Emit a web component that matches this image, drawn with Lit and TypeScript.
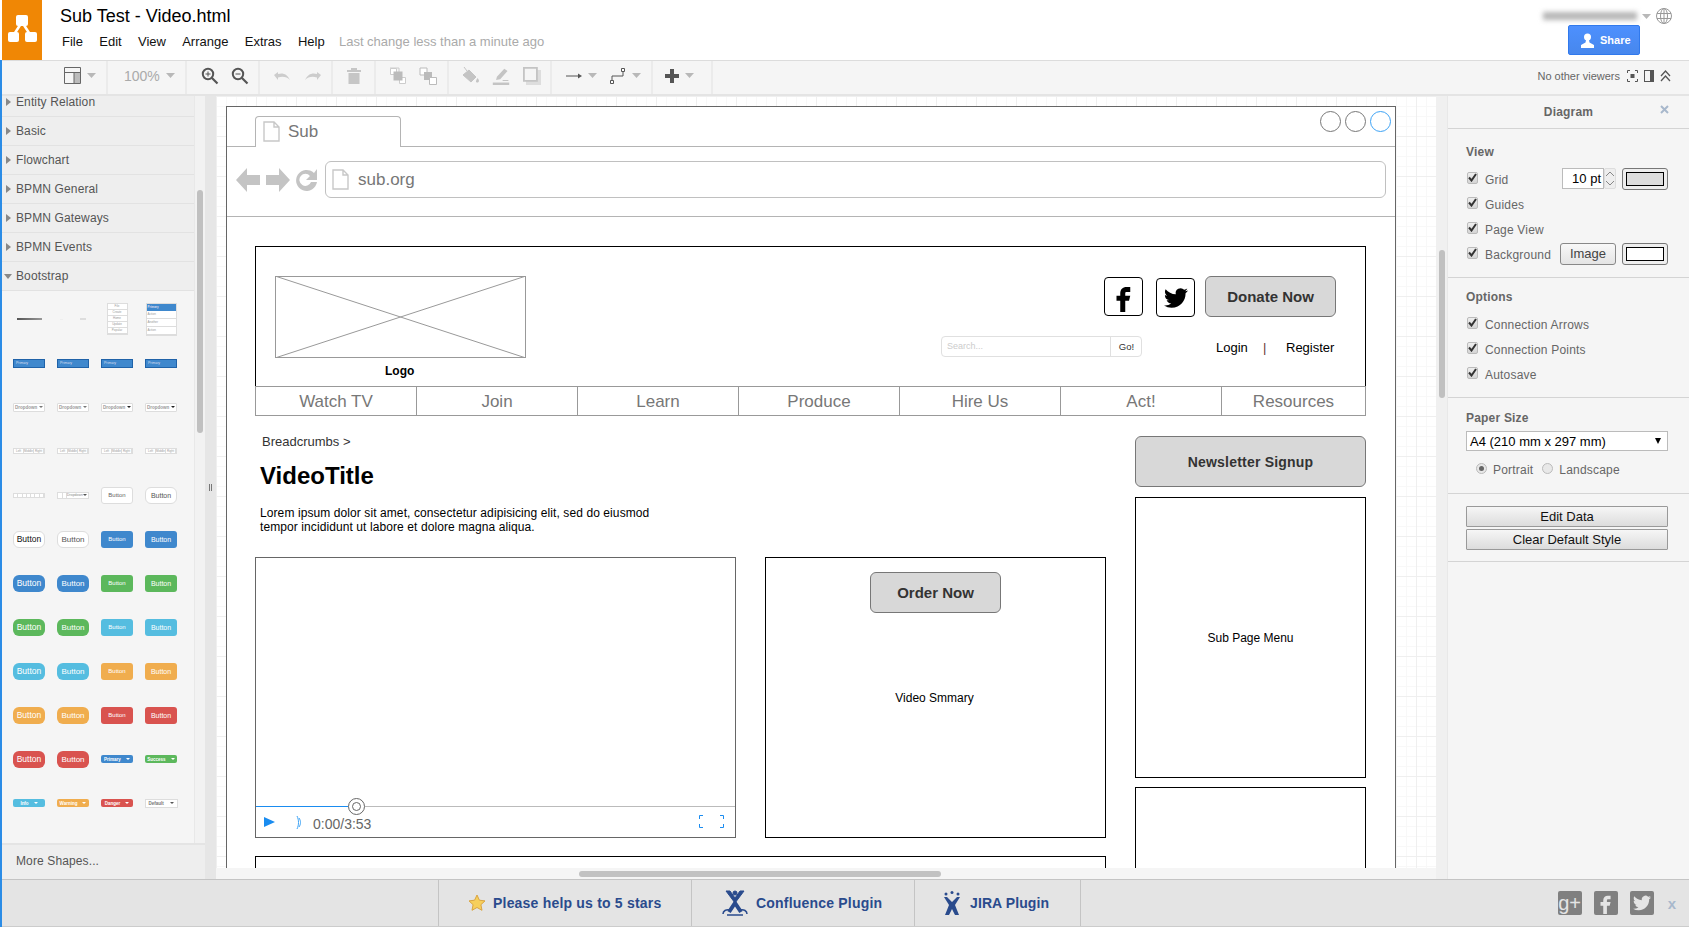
import {LitElement, html, css, svg} from 'lit';
import {customElement} from 'lit/decorators.js';

const caret = html`<svg class="caret" width="9" height="5" viewBox="0 0 9 5"><path d="M0 0h9L4.5 5z" fill="#b8b8b8"/></svg>`;

const docIcon = html`<svg class="doc" width="17" height="21" viewBox="0 0 17 21"><path d="M1 1h10l5 5v14H1z M11 1v5h5" fill="#fff" stroke="#c8c8c8" stroke-width="1.4"/></svg>`;

const fbPath = svg`<path d="M14 8h3V4h-3c-3 0-5 2-5 5v2H6v4h3v9h4v-9h3l1-4h-4V9c0-.6.4-1 1-1z"/>`;
const twPath = svg`<path d="M23.95 4.57a10 10 0 01-2.82.78 4.96 4.96 0 002.16-2.73c-.95.56-2 .96-3.13 1.19a4.92 4.92 0 00-8.38 4.48C7.69 8.1 4.07 6.13 1.64 3.16a4.82 4.82 0 00-.67 2.48c0 1.71.87 3.21 2.19 4.1a4.9 4.9 0 01-2.23-.62v.06a4.92 4.92 0 003.95 4.83 5 5 0 01-2.21.08 4.94 4.94 0 004.6 3.42 9.87 9.87 0 01-6.1 2.1c-.39 0-.78-.02-1.17-.06a14 14 0 007.56 2.21c9.05 0 14-7.5 14-13.99 0-.21 0-.42-.02-.63A9.94 9.94 0 0024 4.59z"/>`;

const toolbarGroups = [
    {w: 106, pl: 62, items: html`
	<svg width="17" height="17" viewBox="0 0 17 17"><path d="M.5.5h16v16H.5z M.5 5.5h16" fill="none" stroke="#666"/><path d="M10 6h6v10h-6z" fill="#bbb"/><path d="M10 5.5v11" stroke="#666"/></svg>
	<span class="gap6"></span>${caret}`},
    {w: 79, pl: 16, items: html`<span class="zoom-val">100%</span><span class="gap11"></span>${caret}`},
    {w: 73, pl: 14, items: html`
	<svg width="18" height="18" viewBox="0 0 18 18"><circle cx="7" cy="7" r="5.2" fill="none" stroke="#555" stroke-width="2"/><path d="M11 11l5.5 5.5" stroke="#555" stroke-width="2.2"/><path d="M4.5 7h5M7 4.5v5" stroke="#555"/></svg>
	<span class="gap12"></span>
	<svg width="18" height="18" viewBox="0 0 18 18"><circle cx="7" cy="7" r="5.2" fill="none" stroke="#555" stroke-width="2"/><path d="M11 11l5.5 5.5" stroke="#555" stroke-width="2.2"/><path d="M4.5 7h5" stroke="#555"/></svg>`},
    {w: 73, pl: 13, items: html`
	<svg width="18" height="18" viewBox="0 0 18 18"><path d="M1 8l4-3v2c5-1.500 9 0 12 6-3-3-7-4-12-2.500V13z" fill="#ccc"/></svg>
	<span class="gap13"></span>
	<svg width="18" height="18" viewBox="0 0 18 18"><path d="M17 8l-4-3v2C8 5.500 4 7 1 13c3-3 7-4 12-2.500V13z" fill="#ccc"/></svg>`},
    {w: 43, pl: 13, items: html`
	<svg width="16" height="18" viewBox="0 0 16 18"><path d="M1 3h14v2H1zM5 1h6v2H5zM2.500 6h11v11h-11z" fill="#c6c6c6"/></svg>`},
    {w: 73, pl: 13, items: html`
	<svg width="18" height="18" viewBox="0 0 18 18"><path d="M1 1h9v9" fill="none" stroke="#ccc"/><path d="M1.500 1.500h6v6h-6zM10.500 10.500h6v6h-6z" fill="#fff" stroke="#ccc"/><path d="M4.500 4.500h9v9h-9z" fill="#bbb"/></svg>
	<span class="gap12"></span>
	<svg width="18" height="18" viewBox="0 0 18 18"><path d="M1 1h7v7H1z" fill="#fff" stroke="#bbb"/><path d="M5 5h8v8H5z" fill="#bbb"/><path d="M10.500 10.500h7v7h-7z" fill="#fff" stroke="#bbb"/></svg>`},
    {w: 103, pl: 13, items: html`
	<svg width="18" height="20" viewBox="0 0 18 20"><path d="M2 1l3 4M1 9l6-5 7 7-5 5z" fill="#c4c4c4" stroke="#c4c4c4"/><path d="M15.500 12c1.500 2 2 3 1 4s-3 .5-2.500-1 1-2 1.500-3z" fill="#c4c4c4"/></svg>
	<span class="gap12"></span>
	<svg width="18" height="20" viewBox="0 0 22 22"><path d="M1 19h20v3H1z" fill="#c4c4c4"/><path d="M5 16l1-4L15 2l4 3-9 10zM13 16h7v1h-7z" fill="#c4c4c4"/></svg>
	<span class="gap13"></span>
	<svg width="18" height="18" viewBox="0 0 18 18"><path d="M3 3h15v15H3z" fill="#ddd"/><path d="M.9.9h13v13H.9z" fill="#f5f5f5" stroke="#c4c4c4" stroke-width="1.800"/></svg>`},
    {w: 101, pl: 14, items: html`
	<svg width="16" height="10" viewBox="0 0 16 10"><path d="M0 5h14" stroke="#555"/><path d="M12 2.500L16 5l-4 2.500z" fill="#555"/></svg>
	<span class="gap6"></span>${caret}<span class="gap13"></span>
	<svg width="16" height="16" viewBox="0 0 16 16"><path d="M2 13V8h11V3" fill="none" stroke="#555"/><path d="M.5 12.500h3v3h-3zM11.500.5h3v3h-3z" fill="#fff" stroke="#555"/></svg>
	<span class="gap6"></span>${caret}`},
    {w: 60, pl: 12, items: html`
	<svg width="14" height="14" viewBox="0 0 14 14"><path d="M5 0h4v5h5v4H9v5H5V9H0V5h5z" fill="#555"/></svg>
	<span class="gap6"></span>${caret}`},
];

const sections = ['Entity Relation', 'Basic', 'Flowchart', 'BPMN General', 'BPMN Gateways', 'BPMN Events'];

const BLUE = '#3f88cd', GREEN = '#5cb85c', CYAN = '#55bde0', ORANGE = '#f0ad4e', RED = '#d9534f';

const btn = (bg: string, fs: number, round = false) =>
    html`<div class="t-btn ${round ? 'round' : ''}" style="background:${bg};font-size:${fs}px">Button</div>`;

const whiteBtn = (fs: number, color: string, round = false) =>
    html`<div class="t-btn white ${round ? 'round' : ''}" style="font-size:${fs}px;color:${color}">Button</div>`;

const split = (bg: string, label: string) =>
    html`<div class="t-split" style="background:${bg}"><span>${label}</span><i></i></div>`;

const bar = html`<div class="t-bar">Primary</div>`;
const drop = (dark = false) => html`<div class="t-drop"><span>Dropdown</span><i class=${dark ? 'dark' : ''}></i></div>`;
const seg = html`<div class="t-seg"><span>Left</span><span>Middle</span><span>Right</span></div>`;

const thumbs = [
    html`<div class="t-line"></div>`,
    html`<div class="t-faint"><i></i><i></i></div>`,
    html`<div class="t-menu">${['File', 'Create', 'Home', 'Update', 'Popular'].map(t => html`<span>${t}</span>`)}</div>`,
    html`<div class="t-list"><b>Primary</b><span>Action</span><span>Another</span><span>Action</span></div>`,
    bar, bar, bar, bar,
    drop(), drop(), drop(true), drop(true),
    seg, seg, seg, seg,
    html`<div class="t-page">${[1, 2, 3, 4, 5, 6, 7].map(() => html`<span></span>`)}</div>`,
    html`<div class="t-combo"><span></span><span></span><em>Dropdown</em><i></i></div>`,
    whiteBtn(6, '#666'), whiteBtn(7, '#555', true),
    whiteBtn(8.5, '#111', true), whiteBtn(8, '#555', true), btn(BLUE, 6), btn(BLUE, 7),
    btn(BLUE, 8.5, true), btn(BLUE, 8, true), btn(GREEN, 6), btn(GREEN, 7),
    btn(GREEN, 8.5, true), btn(GREEN, 8, true), btn(CYAN, 6), btn(CYAN, 7),
    btn(CYAN, 8.5, true), btn(CYAN, 8, true), btn(ORANGE, 6), btn(ORANGE, 7),
    btn(ORANGE, 8.5, true), btn(ORANGE, 8, true), btn(RED, 6), btn(RED, 7),
    btn(RED, 8.5, true), btn(RED, 8, true), split(BLUE, 'Primary'), split(GREEN, 'Success'),
    split(CYAN, 'Info'), split(ORANGE, 'Warning'), split(RED, 'Danger'),
    html`<div class="t-default"><span>Default</span><i></i></div>`,
];

const navItems = ['Watch TV', 'Join', 'Learn', 'Produce', 'Hire Us', 'Act!', 'Resources'];

const check = (label: string) => html`
    <span class="cb"><svg width="9" height="9" viewBox="0 0 9 9"><path d="M1 4.500L3.500 7.500 8 1" fill="none" stroke="#333" stroke-width="2"/></svg></span>
    <span class="cb-label">${label}</span>`;

@customElement('app-root')
class AppRoot extends LitElement {
    static styles = css`
:host {
display: block;
width: 1689px;
height: 927px;
overflow: hidden;
background: #fff;
font-family: "Liberation Sans", Arial, sans-serif;
color: #333;
}
* { box-sizing: border-box; }
.header {
height: 60px;
display: flex;
padding-left: 2px;
}
.logo {
width: 40px;
height: 60px;
background: #f08705;
}
.logo svg { display: block; }
.titles {
padding: 6px 0 0 18px;
flex: 1;
}
.title {
font-size: 18px;
line-height: 21px;
color: #000;
}
.menu {
display: flex;
margin-top: 7px;
font-size: 13px;
line-height: 16px;
color: #111;
padding-left: 2px;
}
.menu span { margin-right: 16.3px; }
.menu .last { color: #aaa; margin-left: -2px; }
.account {
width: 150px;
padding-top: 8px;
display: flex;
flex-direction: column;
align-items: flex-end;
margin-right: 17px;
}
.acct-top {
display: flex;
align-items: center;
gap: 5px;
height: 16px;
}
.blurred {
width: 94px;
height: 8px;
margin-right: 0;
background: #b5b5b5;
filter: blur(2.5px);
}
.share {
margin: 1px 32px 0 0;
width: 72px;
height: 30px;
border: 1px solid #3079ed;
border-radius: 2px;
background: linear-gradient(#4d90fe, #4787ed);
color: #fff;
font-size: 11px;
font-weight: bold;
display: flex;
align-items: center;
padding-left: 11px;
gap: 5px;
}
.left-edge {
border-left: 2px solid #2b8ce6;
}
.toolbar {
height: 36px;
display: flex;
background: #f5f5f5;
border-top: 1px solid #dcdcdc;
border-bottom: 2px solid #e4e4e4;
}
.tb-group {
height: 33px;
padding-bottom: 4px;
display: flex;
align-items: center;
border-right: 2px solid #ebebeb;
}
.gap6 { width: 6px; }
.gap11 { width: 11px; }
.gap12 { width: 12px; }
.gap13 { width: 13px; }
.zoom-val { font-size: 14px; color: #aaa; width: 31px; }
.tb-right {
margin-left: auto;
display: flex;
align-items: center;
gap: 6px;
padding: 0 18px 4px 0;
font-size: 11px;
color: #666;
height: 33px;
}
.tb-right span { margin-right: 1px; }
.main {
height: 783px;
display: flex;
}
.sidebar {
width: 193px;
display: flex;
flex-direction: column;
background: #f5f5f5;
border-right: 1px solid #e8e8e8;
overflow: hidden;
}
.section {
height: 29px;
display: flex;
align-items: center;
gap: 5px;
padding-left: 4px;
background: #eee;
border-bottom: 1px solid #e2e2e2;
font-size: 12px;
line-height: 14px;
letter-spacing: .12px;
color: #555;
}
.section:first-child {
height: 21px;
align-items: flex-start;
line-height: 12px;
}
.section:first-child .tri { margin-top: 2px; }
.tri {
width: 0;
height: 0;
border-left: 5px solid #888;
border-top: 4px solid transparent;
border-bottom: 4px solid transparent;
}
.tri.open {
border-top: 5px solid #888;
border-left: 4px solid transparent;
border-right: 4px solid transparent;
border-bottom: 0;
margin-left: -2px;
margin-right: -1px;
}
.shapes {
flex: 1;
display: grid;
grid-template-columns: repeat(4, 44px);
grid-auto-rows: 44px;
padding: 6px 0 0 5px;
align-content: start;
}
.thumb {
display: flex;
align-items: center;
justify-content: center;
}
.t-btn {
width: 32px;
height: 17px;
border-radius: 3px;
color: #fff;
display: flex;
align-items: center;
justify-content: center;
}
.t-btn.round { border-radius: 6px; }
.t-btn.white { background: #fff; border: 1px solid #ddd; }
.t-split {
width: 32px;
height: 8px;
border-radius: 2px;
color: #fff;
font-size: 4.500px;
font-weight: bold;
display: flex;
align-items: center;
justify-content: center;
gap: 5px;
}
.t-split i {
border-top: 2px solid #fff;
border-left: 2px solid transparent;
border-right: 2px solid transparent;
}
.t-default {
width: 33px;
height: 9px;
background: #fff;
border: 1px solid #ddd;
font-size: 4.500px;
font-weight: bold;
color: #777;
display: flex;
align-items: center;
justify-content: space-around;
}
.t-default i {
border-top: 2px solid #555;
border-left: 2px solid transparent;
border-right: 2px solid transparent;
}
.t-bar {
width: 32px;
height: 9px;
background: #3f88cd;
border: 1px solid #1f62a8;
color: #dde;
font-size: 3.500px;
padding-left: 2px;
display: flex;
align-items: center;
}
.t-drop {
width: 32px;
height: 9px;
background: #fff;
border: 1px solid #ddd;
border-radius: 1px;
color: #999;
font-size: 4.500px;
font-weight: bold;
display: flex;
align-items: center;
justify-content: space-around;
}
.t-drop i {
border-top: 2px solid #777;
border-left: 2px solid transparent;
border-right: 2px solid transparent;
}
.t-drop i.dark { border-top-color: #222; }
.t-seg {
width: 32px;
height: 6px;
display: flex;
background: #fff;
border: 1px solid #ddd;
font-size: 3px;
color: #999;
}
.t-seg span {
flex: 1;
text-align: center;
line-height: 4px;
border-right: 1px solid #ddd;
}
.t-page {
width: 32px;
height: 5px;
display: flex;
border: 1px solid #ddd;
}
.t-page span { flex: 1; border-right: 1px solid #ddd; background: #fff; }
.t-combo {
width: 32px;
height: 7px;
display: flex;
align-items: center;
background: #fff;
border: 1px solid #ddd;
font-size: 3.500px;
color: #888;
}
.t-combo span { width: 5px; height: 100%; border-right: 1px solid #ddd; }
.t-combo em { font-style: normal; flex: 1; text-align: center; }
.t-combo i {
border-top: 2px solid #555;
border-left: 2px solid transparent;
border-right: 2px solid transparent;
margin-right: 1px;
}
.t-line {
width: 25px;
height: 2px;
background: linear-gradient(90deg, #555, #999);
}
.t-faint {
width: 26px;
display: flex;
justify-content: space-between;
align-items: center;
}
.t-faint i { width: 3px; height: 1px; background: #eee; }
.t-faint i + i { width: 6px; height: 2px; background: #ddd; }
.t-menu {
width: 21px;
display: flex;
flex-direction: column;
background: #fff;
border: 1px solid #ddd;
font-size: 3px;
color: #999;
text-align: center;
}
.t-menu span { height: 6px; line-height: 5px; border-bottom: 1px solid #ddd; }
.t-list {
width: 31px;
display: flex;
flex-direction: column;
background: #fff;
border: 1px solid #ddd;
font-size: 3px;
color: #999;
}
.t-list b { height: 7px; background: #3f88cd; color: #dde; padding-left: 1px; line-height: 7px; }
.t-list span { height: 8px; line-height: 7px; padding-left: 1px; border-bottom: 1px solid #ddd; }
.more {
height: 36px;
margin-top: 0;
width: 204px;
background: #eee;
border-top: 2px solid #e4e4e4;
font-size: 12px;
letter-spacing: .12px;
color: #555;
padding: 9px 0 0 14px;
flex: none;
}
.side-wrap {
width: 203px;
display: flex;
flex-direction: column;
}
.side-top {
flex: 1;
min-height: 0;
display: flex;
}
.v-track {
width: 10px;
flex: none;
background: #f2f2f2;
display: flex;
flex-direction: column;
padding: 94px 2px 0;
}
.v-thumb {
width: 6px;
height: 243px;
border-radius: 3px;
background: #c0c0c0;
}
.splitter {
width: 11px;
flex: none;
background: #e6e6e6;
display: flex;
align-items: center;
justify-content: center;
}
.grip {
width: 3px;
height: 7px;
border-left: 1px solid #777;
border-right: 1px solid #777;
}
.canvas-col {
width: 1220px;
flex: none;
display: flex;
flex-direction: column;
}
.canvas {
height: 772px;
position: relative;
overflow: hidden;
background-color: #fff;
background-image:
linear-gradient(#efefef 1px, transparent 1px),
linear-gradient(90deg, #efefef 1px, transparent 1px),
linear-gradient(#f8f8f8 1px, transparent 1px),
linear-gradient(90deg, #f8f8f8 1px, transparent 1px);
background-size: 40px 40px, 40px 40px, 10px 10px, 10px 10px;
}
.h-track {
height: 11px;
background: #f5f5f5;
padding: 3px 0 0 363px;
}
.h-thumb {
width: 362px;
height: 6px;
border-radius: 3px;
background: #c2c2c2;
}
.v2-track {
width: 11px;
flex: none;
background: #f0f0f0;
padding: 154px 2px 0 3px;
}
.v2-thumb {
width: 6px;
height: 148px;
border-radius: 3px;
background: #c0c0c0;
}
.frame {
position: absolute;
left: 10px;
top: 10px;
width: 1170px;
height: 900px;
background: #fff;
border: 1px solid #666;
color: #000;
}
.frame > * { position: absolute; }
.tabline { left: 0; right: 0; top: 39px; height: 1px; background: #b4b4b4; }
.tabline2 { left: 0; right: 0; top: 109px; height: 1px; background: #b4b4b4; }
.tab {
left: 28px;
top: 9px;
width: 146px;
height: 31px;
background: #fff;
border: 1px solid #b4b4b4;
border-bottom: 0;
border-radius: 4px 4px 0 0;
display: flex;
align-items: center;
padding: 0 0 1px 7px;
gap: 8px;
font-size: 17px;
color: #777;
}
.circle {
top: 4px;
width: 21px;
height: 21px;
border-radius: 50%;
border: 1px solid #777;
}
.c1 { left: 1093px; }
.c2 { left: 1118px; }
.c3 { left: 1143px; border-color: #3ea3f5; }
.nav-arrows { left: 9px; top: 60px; }
.url {
left: 98px;
top: 54px;
width: 1061px;
height: 37px;
border: 1px solid #c0c0c0;
border-radius: 6px;
display: flex;
align-items: center;
padding-left: 6px;
gap: 9px;
font-size: 17px;
color: #777;
}
.site-head {
left: 28px;
top: 139px;
width: 1111px;
height: 141px;
border: 1px solid #000;
}
.site-nav {
left: 28px;
top: 279px;
width: 1111px;
height: 30px;
display: grid;
grid-template-columns: repeat(6, 161px) 1fr;
border: 1px solid #999;
font-size: 17px;
color: #777;
}
.site-nav span {
display: flex;
align-items: center;
justify-content: center;
padding-top: 1px;
border-right: 1px solid #999;
}
.site-nav span:last-child { border-right: 0; }
.placeholder { left: 48px; top: 169px; }
.logo-text { left: 158px; top: 257px; font-size: 12px; font-weight: bold; }
.social {
width: 39px;
height: 39px;
border: 1px solid #000;
border-radius: 4px;
background: #fff;
display: flex;
align-items: center;
justify-content: center;
}
.s-fb { left: 877px; top: 170px; }
.s-tw { left: 929px; top: 171px; }
.gbtn {
background: #d8d8d8;
border: 1px solid #777;
border-radius: 6px;
display: flex;
align-items: center;
justify-content: center;
font-weight: bold;
color: #333;
font-size: 15px;
}
.donate { left: 978px; top: 169px; width: 131px; height: 41px; }
.search {
left: 714px;
top: 229px;
width: 201px;
height: 21px;
border: 1px solid #e0e0e0;
border-radius: 4px;
display: flex;
font-size: 9px;
line-height: 19px;
color: #ccc;
}
.search span { flex: 1; padding-left: 5px; border-right: 1px solid #e0e0e0; }
.search b { width: 30px; font-weight: normal; color: #333; text-align: center; font-size: 9.5px; padding-left: 1px; }
.login { left: 989px; top: 233px; font-size: 13px; }
.pipe { left: 1036px; top: 233px; font-size: 13px; color: #633; }
.register { left: 1059px; top: 233px; font-size: 13px; }
.crumbs { left: 35px; top: 327px; font-size: 13px; color: #333; }
.video-title { left: 33px; top: 355px; font-size: 24px; font-weight: bold; }
.lorem { left: 33px; top: 399px; font-size: 12px; line-height: 14px; letter-spacing: .09px; }
.newsletter { left: 908px; top: 329px; width: 231px; height: 51px; font-size: 14px; letter-spacing: .2px; }
.sub-menu {
left: 908px;
top: 390px;
width: 231px;
height: 281px;
border: 1px solid #000;
display: flex;
align-items: center;
justify-content: center;
font-size: 12px;
}
.box-low { left: 908px; top: 680px; width: 231px; height: 300px; border: 1px solid #000; }
.video {
left: 28px;
top: 450px;
width: 481px;
height: 281px;
border: 1px solid #666;
display: flex;
flex-direction: column;
}
.screen { flex: 1; }
.controls {
height: 31px;
border-top: 1px solid #bbb;
display: flex;
align-items: center;
padding: 0 11px 0 8px;
font-size: 14px;
color: #666;
}
.vol { margin-left: 21px; }
.time { margin: 4px 0 0 11px; }
.full { margin-left: auto; margin-top: -2px; }
.played {
position: absolute;
left: 0;
top: 248px;
width: 92px;
height: 1px;
background: #1a8cf0;
}
.knob {
position: absolute;
left: 92px;
top: 240px;
}
.order-box {
left: 538px;
top: 450px;
width: 341px;
height: 281px;
border: 1px solid #000;
}
.order-btn { left: 643px; top: 465px; width: 131px; height: 41px; }
.smry { left: 537px; top: 584px; width: 341px; text-align: center; font-size: 12px; }
.box-bottom { left: 28px; top: 749px; width: 851px; height: 200px; border: 1px solid #000; }
.panel {
width: 242px;
flex: none;
background: #f5f5f5;
border-left: 1px solid #e8e8e8;
color: #666;
font-size: 12px;
letter-spacing: .2px;
}
.p-head {
height: 33px;
border-bottom: 1px solid #d4d4d4;
display: flex;
align-items: center;
justify-content: center;
position: relative;
font-weight: bold;
}
.p-close {
position: absolute;
right: 20px;
top: 9px;
}
.p-sec {
border-bottom: 1px solid #d4d4d4;
padding: 0 21px 0 18px;
}
.sec-view { padding-top: 16px; padding-bottom: 10px; }
.sec-view .p-title { margin-bottom: 8px; }
.sec-opts { padding-top: 12px; padding-bottom: 10px; }
.sec-opts .p-title { margin-bottom: 8px; }
.sec-paper { padding-top: 13px; padding-bottom: 13px; }
.sec-paper .p-title { margin-bottom: 7px; }
.sec-btns { padding-top: 12px; padding-bottom: 11px; }
.p-title {
font-weight: bold;
line-height: 14px;
}
.p-row {
height: 25px;
display: flex;
align-items: center;
}
.cb {
width: 11px;
height: 12px;
border: 1px solid #bbb;
border-radius: 2px;
background: linear-gradient(#eee, #d4d4d4);
display: flex;
align-items: center;
justify-content: center;
margin: -4px 7px 0 1px;
}
.ctl {
margin-left: auto;
margin-top: -2px;
display: flex;
align-items: center;
gap: 6px;
}
.num {
width: 42px;
height: 21px;
background: #fff;
border: 1px solid #bbb;
color: #000;
font-size: 13px;
letter-spacing: 0;
text-align: right;
line-height: 19px;
padding-right: 2px;
}
.spin {
width: 12px;
height: 21px;
margin-left: -6px;
border: 1px solid #ddd;
border-radius: 2px;
background: #eee;
display: flex;
flex-direction: column;
align-items: center;
justify-content: space-around;
}
.swatch {
width: 46px;
height: 22px;
border: 1px solid #777;
border-radius: 3px;
background: #eee;
padding: 3px;
}
.swatch i { display: block; height: 100%; border: 1px solid #000; }
.swatch.grey i { background: #ddd; }
.swatch.white i { background: #fff; }
.img-btn {
width: 56px;
height: 22px;
border: 1px solid #888;
border-radius: 3px;
background: linear-gradient(#f8f8f8, #e4e4e4);
color: #444;
font-size: 13px;
letter-spacing: 0;
text-align: center;
line-height: 19px;
}
.select {
height: 20px;
margin-top: -1px;
background: #fff;
border: 1px solid #bbb;
color: #000;
font-size: 13px;
letter-spacing: 0;
display: flex;
align-items: center;
justify-content: space-between;
padding: 0 6px 0 3px;
}
.select i {
border-top: 6px solid #000;
border-left: 3px solid transparent;
border-right: 3px solid transparent;
}
.radios {
display: flex;
align-items: center;
height: 20px;
margin-top: 9px;
padding-left: 10px;
gap: 6px;
}
.radio {
width: 11px;
height: 11px;
border-radius: 50%;
border: 1px solid #bbb;
background: #e8e8e8;
margin-top: -4px;
display: flex;
align-items: center;
justify-content: center;
}
.radio i { width: 5px; height: 5px; border-radius: 50%; background: #666; }
.radio + span + .radio { margin-left: 3px; }
.p-btn {
height: 21px;
border: 1px solid #999;
border-radius: 1px;
background: linear-gradient(#f6f6f6, #dcdcdc);
color: #111;
font-size: 13px;
letter-spacing: 0;
text-align: center;
line-height: 19px;
}
.p-btn + .p-btn { margin-top: 2px; }
.footer {
height: 48px;
background: #e4e4e4;
border-top: 1px solid #c4c4c4;
border-bottom: 1px solid #ccc;
display: flex;
align-items: stretch;
padding-left: 436px;
color: #2a4b8d;
font-size: 14px;
font-weight: bold;
}
.f-item {
display: flex;
align-items: center;
border-left: 1px solid #c4c4c4;
}
.f-stars { width: 253px; padding-left: 30px; gap: 8px; letter-spacing: .2px; }
.f-conf { width: 223px; padding-left: 30px; gap: 8px; letter-spacing: .2px; }
.f-jira { width: 167px; padding-left: 28px; gap: 9px; letter-spacing: .1px; border-right: 1px solid #c4c4c4; }
.f-social {
margin-left: auto;
display: flex;
align-items: center;
gap: 12px;
padding-right: 13px;
}
.sq {
width: 24px;
height: 24px;
border-radius: 2px;
background: #808080;
display: flex;
align-items: center;
justify-content: center;
overflow: hidden;
color: #e4e4e4;
font-size: 20px;
font-weight: normal;
line-height: 20px;
}
.f-x { color: #a8b8cc; font-size: 15px; margin-left: 2px; }
`;

    render() {
	return html`
<div class="header">
  <div class="logo">
    <svg width="40" height="60" viewBox="0 0 40 60">
      <path d="M20 22L11 36M20 22l9 14" stroke="#fff" stroke-width="2.500"/>
      <rect x="14" y="15" width="12" height="11" rx="2" fill="#fff"/>
      <rect x="6" y="32" width="11" height="10" rx="2" fill="#fff"/>
      <rect x="23" y="32" width="12" height="10" rx="2" fill="#fff"/>
    </svg>
  </div>
  <div class="titles">
    <div class="title">Sub Test - Video.html</div>
    <div class="menu">
      <span>File</span><span>Edit</span><span>View</span><span>Arrange</span><span>Extras</span><span>Help</span>
      <span class="last">Last change less than a minute ago</span>
    </div>
  </div>
  <div class="account">
    <div class="acct-top">
      <div class="blurred"></div>
      ${caret}
      <svg width="16" height="16" viewBox="0 0 16 16" fill="none" stroke="#999"><circle cx="8" cy="8" r="7.500"/><ellipse cx="8" cy="8" rx="3.500" ry="7.500"/><path d="M8 .5v15M1 5.500h14M1 10.500h14"/></svg>
    </div>
    <div class="share">
      <svg width="15" height="15" viewBox="0 0 15 15" fill="#fff"><circle cx="7.500" cy="4" r="3.500"/><path d="M6 7h3l.5 2.500L14 12v3H1v-3l4.500-2.500z"/></svg>
      Share
    </div>
  </div>
</div>
<div class="left-edge">
  <div class="toolbar">
    ${toolbarGroups.map(g => html`<div class="tb-group" style="width:${g.w}px;padding-left:${g.pl}px">${g.items}</div>`)}
    <div class="tb-right">
      <span>No other viewers</span>
      <svg width="11" height="12" viewBox="0 0 11 12" fill="none" stroke="#555"><path d="M.5 3V.5H3M8 .5h2.500V3M.5 9v2.500H3M8 11.500h2.500V9"/><rect x="3.500" y="4" width="4" height="4" fill="#555" stroke="none"/></svg>
      <svg width="10" height="12" viewBox="0 0 10 12" fill="none" stroke="#555"><rect x=".5" y=".5" width="9" height="11"/><rect x="6" y="1" width="3" height="10" fill="#555" stroke="none"/></svg>
      <svg width="11" height="12" viewBox="0 0 11 12" fill="none" stroke="#555" stroke-width="1.300"><path d="M1 6l4.500-5L10 6M1 11l4.500-5L10 11"/></svg>
    </div>
  </div>
  <div class="main">
    <div class="side-wrap">
      <div class="side-top">
        <div class="sidebar">
          <div class="sections">
            ${sections.map(s => html`<div class="section"><span class="tri"></span>${s}</div>`)}
            <div class="section"><span class="tri open"></span>Bootstrap</div>
          </div>
          <div class="shapes">
            ${thumbs.map(t => html`<div class="thumb">${t}</div>`)}
          </div>
        </div>
        <div class="v-track"><div class="v-thumb"></div></div>
      </div>
      <div class="more">More Shapes...</div>
    </div>
    <div class="splitter"><div class="grip"></div></div>
    <div class="canvas-col">
      <div class="canvas">
        <div class="frame">
          <div class="tabline"></div>
          <div class="tab">${docIcon}Sub</div>
          <div class="circle c1"></div>
          <div class="circle c2"></div>
          <div class="circle c3"></div>
          <svg class="nav-arrows" width="84" height="26" viewBox="0 0 84 26" fill="#c4c4c4">
            <path d="M0 13L11 1v7h13v10H11v7z"/>
            <path d="M54 13L43 1v7H30v10h13v7z"/>
            <path d="M81 15a10.500 10.500 0 1 1-3-9l3-4v11H70l4-4a6 6 0 1 0 1 6z"/>
          </svg>
          <div class="url">${docIcon}sub.org</div>
          <div class="tabline2"></div>

          <div class="site-head"></div>
          <div class="site-nav">${navItems.map(n => html`<span>${n}</span>`)}</div>
          <svg class="placeholder" width="251" height="82" viewBox="0 0 251 82" fill="none" stroke="#999">
            <rect x=".5" y=".5" width="250" height="81"/>
            <path d="M0 0L251 82M251 0L0 82"/>
          </svg>
          <div class="logo-text">Logo</div>
          <div class="social s-fb"><svg width="30" height="30" viewBox="0 0 24 24">${fbPath}</svg></div>
          <div class="social s-tw"><svg width="24" height="24" viewBox="0 0 24 24">${twPath}</svg></div>
          <div class="gbtn donate">Donate Now</div>
          <div class="search"><span>Search...</span><b>Go!</b></div>
          <div class="login">Login</div>
          <div class="pipe">|</div>
          <div class="register">Register</div>

          <div class="crumbs">Breadcrumbs &gt;</div>
          <div class="video-title">VideoTitle</div>
          <div class="lorem">Lorem ipsum dolor sit amet, consectetur adipisicing elit, sed do eiusmod<br>tempor incididunt ut labore et dolore magna aliqua.</div>

          <div class="gbtn newsletter">Newsletter Signup</div>
          <div class="sub-menu">Sub Page Menu</div>
          <div class="box-low"></div>

          <div class="video">
            <div class="screen"></div>
            <div class="played"></div>
            <svg class="knob" width="17" height="17" viewBox="0 0 17 17" fill="#fff" stroke="#666"><circle cx="8.500" cy="8.500" r="8"/><circle cx="8.500" cy="8.500" r="4"/></svg>
            <div class="controls">
              <svg width="11" height="10" viewBox="0 0 11 10"><path d="M0 0l11 5-11 5z" fill="#1a8cf0"/></svg>
              <svg class="vol" width="6" height="15" viewBox="0 0 6 15" fill="none" stroke="#3ea3f5"><path d="M1 1c2 4 2 9 0 13M3 3c2 3 2 6 0 9"/></svg>
              <span class="time">0:00/3:53</span>
              <svg class="full" width="25" height="13" viewBox="0 0 25 13" fill="none" stroke="#1a8cf0"><path d="M4 .5H.5V4M21 .5h3.500V4M.5 9v3.500H4M24.500 9v3.500H21"/></svg>
            </div>
          </div>
          <div class="order-box"></div>
          <div class="gbtn order-btn">Order Now</div>
          <div class="smry">Video Smmary</div>
          <div class="box-bottom"></div>
        </div>
      </div>
      <div class="h-track"><div class="h-thumb"></div></div>
    </div>
    <div class="v2-track"><div class="v2-thumb"></div></div>
    <div class="panel">
      <div class="p-head">Diagram
        <svg class="p-close" width="9" height="9" viewBox="0 0 9 9"><path d="M1 1l7 7M8 1L1 8" stroke="#a8b8cc" stroke-width="2"/></svg>
      </div>
      <div class="p-sec sec-view">
        <div class="p-title">View</div>
        <div class="p-row">${check('Grid')}
          <div class="ctl">
            <div class="num">10 pt</div>
            <div class="spin">
              <svg width="8" height="5" viewBox="0 0 8 5"><path d="M0 5l4-4 4 4" fill="none" stroke="#888"/></svg>
              <svg width="8" height="5" viewBox="0 0 8 5"><path d="M0 0l4 4 4-4" fill="none" stroke="#888"/></svg>
            </div>
            <div class="swatch grey"><i></i></div>
          </div>
        </div>
        <div class="p-row">${check('Guides')}</div>
        <div class="p-row">${check('Page View')}</div>
        <div class="p-row">${check('Background')}
          <div class="ctl">
            <div class="img-btn">Image</div>
            <div class="swatch white"><i></i></div>
          </div>
        </div>
      </div>
      <div class="p-sec sec-opts">
        <div class="p-title">Options</div>
        <div class="p-row">${check('Connection Arrows')}</div>
        <div class="p-row">${check('Connection Points')}</div>
        <div class="p-row">${check('Autosave')}</div>
      </div>
      <div class="p-sec sec-paper">
        <div class="p-title">Paper Size</div>
        <div class="select">A4 (210 mm x 297 mm)<i></i></div>
        <div class="radios">
          <span class="radio"><i></i></span><span>Portrait</span>
          <span class="radio"></span><span>Landscape</span>
        </div>
      </div>
      <div class="p-sec sec-btns">
        <div class="p-btn">Edit Data</div>
        <div class="p-btn">Clear Default Style</div>
      </div>
    </div>
  </div>
  <div class="footer">
    <div class="f-item f-stars">
      <svg width="16" height="16" viewBox="0 0 16 16"><path d="M8 0l2.400 5.200 5.600.7-4.100 3.800 1.100 5.600L8 12.500l-5 2.800 1.100-5.600L0 5.900l5.600-.7z" fill="#f6cf5c" stroke="#d9a441"/></svg>
      Please help us to 5 stars
    </div>
    <div class="f-item f-conf">
      <svg width="26" height="26" viewBox="0 0 26 26" fill="none" stroke="#2a4b8d">
        <path d="M4 1l9 12 9-12h-4l-5 7-5-7z" fill="#2a4b8d"/>
        <path d="M7 22l6-9 6 9" stroke-width="4"/>
        <circle cx="13" cy="3" r="2" fill="#2a4b8d"/>
        <path d="M1 24c0-3 3-5 7-4M25 24c0-3-3-5-7-4M5 25h16" stroke-width="1.500"/>
      </svg>
      Confluence Plugin
    </div>
    <div class="f-item f-jira">
      <svg width="18" height="24" viewBox="0 0 18 24" fill="#2a4b8d">
        <circle cx="3" cy="3" r="1.500"/><circle cx="9" cy="1.500" r="1.500"/><circle cx="15" cy="3" r="1.500"/>
        <path d="M1 6h3l5 5 5-5h3l-5 8 4 10h-4l-3-6-3 6H2l4-10z"/>
      </svg>
      JIRA Plugin
    </div>
    <div class="f-social">
      <div class="sq">g+</div>
      <div class="sq"><svg width="22" height="22" viewBox="0 0 24 24" fill="#e4e4e4">${fbPath}</svg></div>
      <div class="sq"><svg width="18" height="18" viewBox="0 0 24 24" fill="#e4e4e4">${twPath}</svg></div>
      <span class="f-x">x</span>
    </div>
  </div>
</div>
`;
    }
}
